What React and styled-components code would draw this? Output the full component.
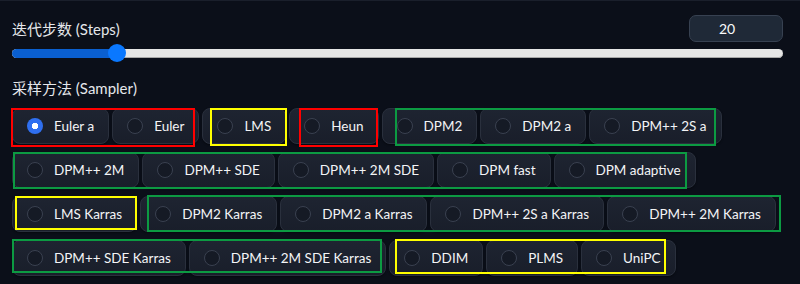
import styled, { createGlobalStyle } from "styled-components";

const GlobalStyle = createGlobalStyle`
  html, body {
    margin: 0;
    padding: 0;
    background: #0b0f19;
  }
  body {
    font-family: Lato, "Noto Sans CJK SC", sans-serif;
    color: #e5e7eb;
  }
`;

const Page = styled.div`
  position: relative;
  width: 800px;
  height: 284px;
  box-sizing: border-box;
  padding: 15px 17px 0 12px;
  border-top: 1px solid #1a1f2b;
  overflow: hidden;
`;

const HeaderRow = styled.div`
  display: flex;
  justify-content: space-between;
  align-items: center;
  height: 27px;
  margin-top: -1px;
`;

const Label = styled.div`
  font-size: 15px;
  line-height: 20px;
  color: #e5e7eb;
`;

const NumberBox = styled.div`
  width: 94px;
  height: 27px;
  box-sizing: border-box;
  border: 1px solid #374151;
  border-radius: 7px;
  background: #1f2937;
  color: #f9fafb;
  font-size: 14px;
  display: flex;
  align-items: center;
  justify-content: center;
  padding-right: 18px;
`;

const SliderWrap = styled.div`
  position: relative;
  height: 18px;
  margin-top: 2px;
  display: flex;
  align-items: center;
`;

const Track = styled.div`
  width: 100%;
  height: 9px;
  border-radius: 5px;
  background: #e6e6e6;
  box-shadow: inset 0 -1px 0 #a8a8a8;
  overflow: hidden;
`;

const Fill = styled.div`
  height: 100%;
  background: #0a5fd0;
`;

const Thumb = styled.div`
  position: absolute;
  top: 0;
  width: 18px;
  height: 18px;
  border-radius: 50%;
  background: #0a78ff;
`;

const SectionLabel = styled(Label)`
  margin-top: 16px;
`;

const RadioGroup = styled.div`
  display: flex;
  flex-wrap: wrap;
  column-gap: 3px;
  row-gap: 8px;
  margin-top: 10px;
`;

const RadioItem = styled.label`
  display: flex;
  align-items: center;
  height: 36px;
  box-sizing: border-box;
  padding: 0 14px 0 14px;
  border: 1px solid #2a303d;
  border-radius: 8px;
  background: linear-gradient(to bottom, #1e2431, #191e2a);
  box-shadow: 0 1px 2px rgba(0, 0, 0, 0.4);
  font-size: 13.5px;
  color: #f3f4f6;
  white-space: nowrap;
`;

const Dot = styled.span`
  width: 16px;
  height: 16px;
  box-sizing: border-box;
  border-radius: 50%;
  margin-right: 11px;
  flex-shrink: 0;
  border: ${(p) => (p.$checked ? "none" : "1px solid #3a4150")};
  background: ${(p) =>
    p.$checked
      ? "radial-gradient(circle, #ffffff 0 3px, #2f6ff0 3.5px)"
      : "#151a25"};
`;

const Annotation = styled.div.attrs((p) => ({
  style: { left: p.$x, top: p.$y, width: p.$w, height: p.$h },
}))`
  position: absolute;
  box-sizing: border-box;
  border: 2px solid ${(p) => p.$color};
  pointer-events: none;
`;

const samplers = [
  "Euler a",
  "Euler",
  "LMS",
  "Heun",
  "DPM2",
  "DPM2 a",
  "DPM++ 2S a",
  "DPM++ 2M",
  "DPM++ SDE",
  "DPM++ 2M SDE",
  "DPM fast",
  "DPM adaptive",
  "LMS Karras",
  "DPM2 Karras",
  "DPM2 a Karras",
  "DPM++ 2S a Karras",
  "DPM++ 2M Karras",
  "DPM++ SDE Karras",
  "DPM++ 2M SDE Karras",
  "DDIM",
  "PLMS",
  "UniPC",
];

const RED = "#ff0000";
const YELLOW = "#ffff00";
const GREEN = "#0c9a42";

// hand-drawn marker boxes over the sampler options
const marks = [
  { color: RED, x: 11, y: 107, w: 184, h: 39 },
  { color: YELLOW, x: 210, y: 107, w: 77, h: 38 },
  { color: RED, x: 299, y: 107, w: 79, h: 39 },
  { color: GREEN, x: 395, y: 107, w: 321, h: 38 },
  { color: GREEN, x: 13, y: 151, w: 674, h: 37 },
  { color: YELLOW, x: 15, y: 195, w: 122, h: 34 },
  { color: GREEN, x: 147, y: 194, w: 634, h: 37 },
  { color: GREEN, x: 12, y: 238, w: 370, h: 34 },
  { color: YELLOW, x: 395, y: 238, w: 271, h: 35 },
];

const steps = 20;
const stepsMin = 1;
const stepsMax = 150;

const App = () => {
  const ratio = (steps - stepsMin) / (stepsMax - stepsMin);
  const thumbLeft = `calc(${ratio} * (100% - 18px))`;
  return (
    <Page>
      <GlobalStyle />
      <HeaderRow>
        <Label>迭代步数 (Steps)</Label>
        <NumberBox>{steps}</NumberBox>
      </HeaderRow>
      <SliderWrap>
        <Track>
          <Fill style={{ width: `calc(${ratio} * (100% - 18px) + 9px)` }} />
        </Track>
        <Thumb style={{ left: thumbLeft }} />
      </SliderWrap>
      <SectionLabel>采样方法 (Sampler)</SectionLabel>
      <RadioGroup>
        {samplers.map((name, i) => (
          <RadioItem key={name}>
            <Dot $checked={i === 0} />
            {name}
          </RadioItem>
        ))}
      </RadioGroup>
      {marks.map((m, i) => (
        <Annotation key={i} $color={m.color} $x={m.x} $y={m.y} $w={m.w} $h={m.h} />
      ))}
    </Page>
  );
};

export default App;
